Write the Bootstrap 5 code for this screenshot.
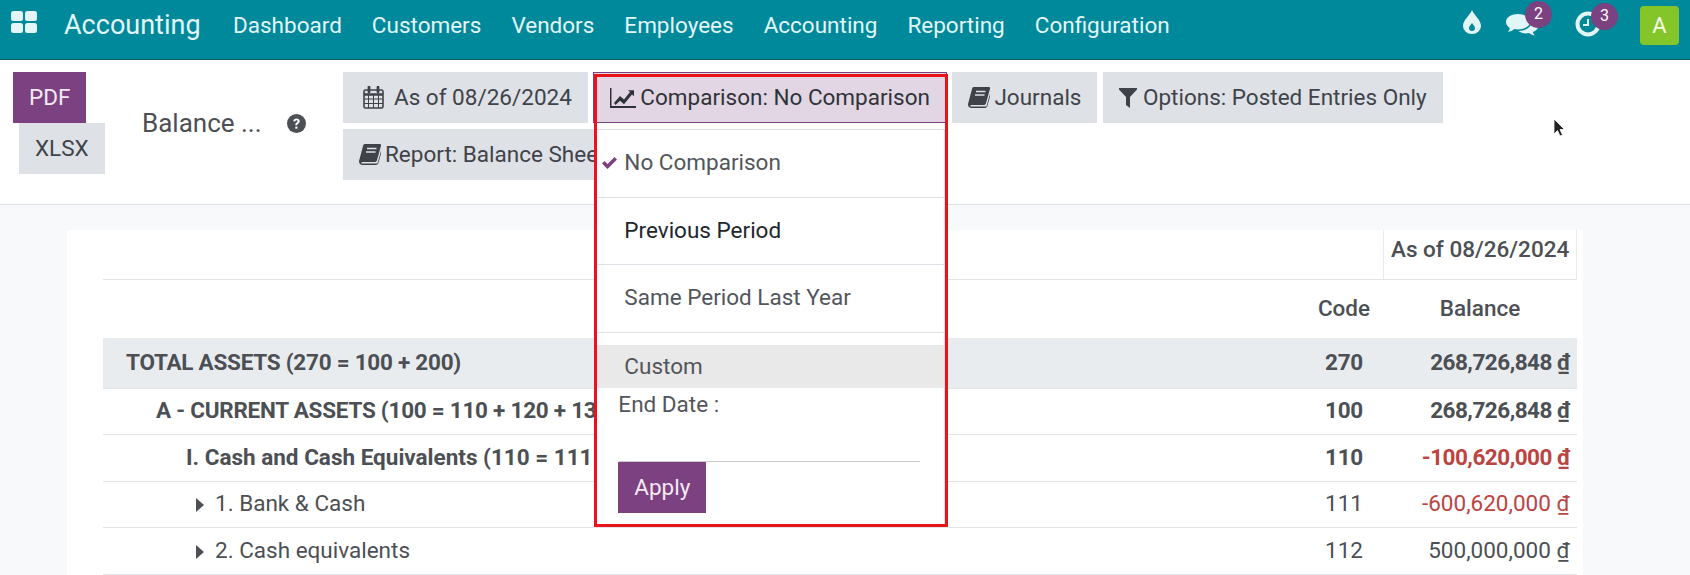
<!DOCTYPE html>
<html lang="en">
<head>
  <meta charset="UTF-8">
  <title>Balance Sheet</title>
  <link href="https://cdn.jsdelivr.net/npm/bootstrap@5.3.3/dist/css/bootstrap.min.css" rel="stylesheet">
  <style>
    html, body { height: 575px; overflow: hidden; }
    body { font-family: Roboto, "Liberation Sans", sans-serif; font-size: 22.5px; color: #4c4f54; background: #f8f9fa; position: relative; }
    .topbar { height: 60px; background: #00889b; border-bottom: 1px solid #0a5f6c; color: #e3f6f7; padding: 0 11px 8px 11px; }
    .apps-icon { width: 26px; height: 22px; margin-bottom: 7px; flex: none; }
    .brand-name { font-size: 27px; margin-left: 27px; margin-right: 32px; width: 137px; flex: none; white-space: nowrap; }
    .top-link { color: #e3f6f7; text-decoration: none; font-size: 22.5px; margin-right: 30px; }
    .top-icons { margin-left: auto; position: relative; }
    .drop-icon { margin-right: 25px; margin-bottom: 8px; }
    .sys-item { position: relative; display: block; }
    .sys-chat { margin-right: 36px; margin-bottom: 3px; }
    .sys-clock { margin-right: 38px; margin-bottom: 4px; }
    .count-dot { position: absolute; width: 27px; height: 27px; border-radius: 50%; background: #7c4180; color: #fff; font-size: 16px; line-height: 26px; text-align: center; }
    .dot-chat { left: 19px; top: -11px; }
    .dot-clock { left: 17px; top: -7px; }
    .avatar-box { width: 39px; height: 39px; border-radius: 4px; background: #84c52a; color: #f4fbe8; font-size: 22px; line-height: 39px; text-align: center; }
    .toolbar { height: 145px; background: #fff; border-bottom: 1px solid #dee2e6; padding: 12px 0 0 13px; }
    .export-col { width: 92px; flex: none; }
    .flat-btn { border: 0; border-radius: 0; height: 51px; padding: 0 16px; font-size: 22.5px; color: #3f4349; background: #dee1e6; white-space: nowrap; display: inline-flex; align-items: center; gap: 4px; }
    .flat-btn svg { flex: none; }
    .btn-plum { background: #7c4180; color: #f3eaf4; }
    .btn-xlsx { margin-left: 6px; padding-right: 16px; }
    .report-title { width: 238px; flex: none; padding: 0 0 0 37px; height: 102px; font-size: 26px; color: #4c4f54; }
    .report-title svg { margin-left: 25px; }
    .filter-wrap { width: 1130px; row-gap: 6px; column-gap: 5.5px; }
    .icon-wide { margin-left: 4px; margin-right: 6px; }
    .btn-options { gap: 6px; }
    .filter-active { background: #e2d6e4; border: 1px solid #7c4180; color: #2f3338; }
    .menu-anchor { position: relative; }
    .compare-menu { position: absolute; top: 57px; left: 2px; width: 350px; margin: 0; padding: 0; border: 1px solid #dee2e6; border-radius: 0; z-index: 5; font-size: 22.5px; height: 397px; }
    .compare-menu .dropdown-item { height: 67.5px; display: flex; align-items: center; padding: 0 0 0 28px; position: relative; color: #52565b; border-bottom: 1px solid #dee2e6; }
    .compare-menu .dropdown-item.item-hover { color: #22262b; }
    .compare-menu .dropdown-item.item-custom { height: 43px; margin-top: 12px; background: #e9e9e9; border: 0; padding-top: 1px; }
    .check-mark { position: absolute; left: 6px; top: 27px; }
    .end-date { padding: 1px 0 0 22px; color: #52565b; line-height: 30px; }
    .date-line { margin: 42px 24px 0 23px; height: 1px; background: #c9c9c9; }
    .btn-apply { margin-left: 22px; width: 88px; padding: 2px 0 0; justify-content: center; }
    .sheet { width: 1516px; margin: 25px 0 0 67px; background: #fff; height: 346px; padding: 0 6px 0 36px; }
    .sheet-table { width: 1474px; table-layout: fixed; margin: 0; color: #4c4f54; --bs-table-bg: transparent; }
    .sheet-table td, .sheet-table th { padding: 0 7px; border-color: #e2e5e8; vertical-align: middle; font-weight: 400; white-space: nowrap; overflow: hidden; }
    .col-code { width: 79px; text-align: center; }
    .col-amount { width: 193px; text-align: right; white-space: nowrap; }
    .row-as-of td { height: 49px; padding-bottom: 9px; }
    .row-as-of .head-date { border-left: 1px solid #e9ecef; border-right: 1px solid #e9ecef; font-weight: 500; text-align: center; }
    .row-heads td { height: 59px; border-bottom: 0; font-weight: 500; }
    .row-heads .col-amount { text-align: center; }
    .sheet-table tr.line-a td { height: 46.5px; }
    .row-total td { background: #e9ecef; height: 50px !important; }
    .is-bold td { font-weight: 700; letter-spacing: -.25px; }
    .is-bold .col-amount { letter-spacing: -.5px; }
    .is-bold td.label-wide { letter-spacing: 0; }
    .neg { color: #bb4442; }
    .cur { text-decoration: underline; }
    .indent-0 { padding-left: 23px !important; }
    .indent-1 { padding-left: 53px !important; }
    .indent-2 { padding-left: 83px !important; }
    .indent-3 { padding-left: 93px !important; }
    .caret-r { margin-right: 11px; }
    .mark-box { position: absolute; left: 594px; top: 74px; width: 354px; height: 453px; border: 3px solid #e8131b; z-index: 6; pointer-events: none; }
    .mouse-arrow { position: absolute; left: 1553px; top: 118px; z-index: 6; }
  </style>
</head>
<body>
  <!-- top bar -->
  <nav class="topbar d-flex align-items-center">
    <svg class="apps-icon" viewBox="0 0 26 22" fill="#e3f6f7"><rect x="0" y="0" width="12" height="10" rx="2.500"/><rect x="14" y="0" width="12" height="10" rx="2.500"/><rect x="0" y="12" width="12" height="10" rx="2.500"/><rect x="14" y="12" width="12" height="10" rx="2.500"/></svg>
    <span class="brand-name">Accounting</span>
    <a class="top-link" href="#">Dashboard</a>
    <a class="top-link" href="#">Customers</a>
    <a class="top-link" href="#">Vendors</a>
    <a class="top-link" href="#">Employees</a>
    <a class="top-link" href="#">Accounting</a>
    <a class="top-link" href="#">Reporting</a>
    <a class="top-link" href="#">Configuration</a>
    <div class="top-icons d-flex align-items-center">
      <svg class="drop-icon" width="18" height="24" viewBox="0 0 18 24" fill="#e3f6f7"><path fill-rule="evenodd" d="M9 0C11 5 18 10 18 16a9 8 0 0 1-18 0C0 10 7 5 9 0ZM9 13c-1 2-3 3-3 5a3 3 0 0 0 6 0c0-2-2-3-3-5Z"/></svg>
      <div class="sys-item sys-chat">
        <svg width="32" height="24" viewBox="0 0 32 24" fill="#e3f6f7" class="d-block"><path d="M12 2C5.500 2 0 5 0 10c0 2.500 1.500 4.500 3.800 5.900C3.500 17.500 2.700 19 1.800 20c2.500-.3 5-1.500 6.500-3 1.300.3 2.400.4 3.700.4 6.500 0 12-3.400 12-7.700S18.500 2 12 2Z"/><path d="M25.500 9.500c.3 4.800-5 9.300-13 9.600 2 1.700 4.500 2.400 7.400 2.400 1 0 2-.1 3-.4 1.400 1.200 3.500 2.200 5.800 2.400-.8-1-1.600-2.100-1.900-3.400C30 19 32 16.800 32 14.500c0-2.200-2.700-4-6.500-5Z"/></svg>
        <span class="count-dot dot-chat">2</span>
      </div>
      <div class="sys-item sys-clock">
        <svg width="28" height="28" viewBox="0 0 28 28" fill="none" stroke="#e3f6f7" class="d-block"><circle cx="14" cy="14" r="10.500" stroke-width="4"/><path d="M14 9v6h-5" stroke-width="2"/></svg>
        <span class="count-dot dot-clock">3</span>
      </div>
      <div class="avatar-box">A</div>
    </div>
  </nav>

  <!-- control panel -->
  <div class="toolbar d-flex">
    <div class="export-col">
      <button class="btn flat-btn btn-plum d-flex">PDF</button>
      <button class="btn flat-btn btn-xlsx d-flex">XLSX</button>
    </div>
    <div class="report-title d-flex align-items-center">
      <span>Balance ...</span>
      <svg width="19" height="19" viewBox="0 0 19 19"><circle cx="9.500" cy="9.500" r="9.500" fill="#4c4f54"/><path d="M6.300 7.300c.2-1.900 1.500-2.800 3.200-2.800 1.900 0 3.200 1.100 3.200 2.700 0 2.200-2.500 2.200-2.500 4H8.300c0-2.700 2.300-2.700 2.300-3.900 0-.6-.5-1-1.100-1-.7 0-1.100.4-1.300 1.200Z" fill="#fff"/><rect x="8.300" y="12.600" width="2.100" height="2.100" fill="#fff"/></svg>
    </div>
    <div class="filter-wrap d-flex flex-wrap align-content-start">
      <button class="btn flat-btn">
        <svg class="icon-wide" width="21" height="23" viewBox="0 0 21 23" fill="none" stroke="#3f4349"><rect x="1" y="4" width="19" height="18" rx="1.500" stroke-width="1.600"/><path d="M1 8.500h19" stroke-width="2.500"/><path d="M5.500 8v14M10.500 8v14M15.500 8v14M1 13h19M1 17.500h19" stroke-width="1"/><path d="M6 1v5M15 1v5" stroke-width="2.800" stroke-linecap="round"/></svg>
        <span>As of 08/26/2024</span>
      </button>
      <div class="menu-anchor">
        <button class="btn flat-btn filter-active">
          <svg width="26" height="20" viewBox="0 0 26 20" fill="#2f3338"><path d="M0 0h1.500v18H26v2H0Z"/><path d="M4 15l6-7 4 3.500 6-7.500-2-1.700h6v6l-2-1.700-8 9.600-4-3.500-4.500 4.300Z"/></svg>
          <span>Comparison: No Comparison</span>
        </button>
        <div class="dropdown-menu show compare-menu">
          <a class="dropdown-item" href="#">
            <svg class="check-mark" width="15" height="12" viewBox="0 0 15 12" fill="#7c4180"><path d="M0 6.500l2.500-2.500 3 3L12.500 0 15 2.500 5.500 12Z"/></svg>
            No Comparison
          </a>
          <a class="dropdown-item item-hover" href="#">Previous Period</a>
          <a class="dropdown-item" href="#">Same Period Last Year</a>
          <a class="dropdown-item item-custom" href="#">Custom</a>
          <div class="end-date">End Date :</div>
          <div class="date-line"></div>
          <button class="btn flat-btn btn-plum btn-apply">Apply</button>
        </div>
      </div>
      <button class="btn flat-btn">
        <svg width="22" height="21" viewBox="0 0 22 21" fill="#3f4349"><path d="M6 0h15c1 0 1.300.8 1 1.800l-4 14.500c-.4 1.300-1 1.700-2 1.700H4c-1 0-1.700.5-1.700 1 0 .4.400.6 1.200.6h14c.6 0 1-.2 1.200-.8l3.800-13.500.5 1-3.700 13C18.600 20.600 18 21 17 21H3.500C1.500 21 0 19.500 0 17.500c0-.6.100-1 .3-1.600L4 2C4.400.6 5 0 6 0Z"/><path d="M8 4.500h9.500M7 8h9.500" stroke="#dee1e6" stroke-width="1.500"/></svg>
        <span>Journals</span>
      </button>
      <button class="btn flat-btn btn-options">
        <svg width="18" height="20" viewBox="0 0 18 20" fill="#3f4349"><path d="M0 0h18v1.500L11 9v11L7 17V9L0 1.500Z"/></svg>
        <span>Options: Posted Entries Only</span>
      </button>
      <button class="btn flat-btn">
        <svg width="22" height="21" viewBox="0 0 22 21" fill="#3f4349"><path d="M6 0h15c1 0 1.300.8 1 1.800l-4 14.500c-.4 1.300-1 1.700-2 1.700H4c-1 0-1.700.5-1.700 1 0 .4.400.6 1.200.6h14c.6 0 1-.2 1.200-.8l3.800-13.500.5 1-3.700 13C18.600 20.600 18 21 17 21H3.500C1.500 21 0 19.500 0 17.500c0-.6.100-1 .3-1.600L4 2C4.400.6 5 0 6 0Z"/><path d="M8 4.500h9.500M7 8h9.500" stroke="#dee1e6" stroke-width="1.500"/></svg>
        <span>Report: Balance Sheet</span>
      </button>
    </div>
  </div>

  <!-- report -->
  <div class="sheet">
    <table class="table sheet-table">
      <colgroup><col><col class="col-code"><col class="col-amount"></colgroup>
      <tr class="row-as-of"><td colspan="2"></td><td class="head-date">As of 08/26/2024</td></tr>
      <tr class="row-heads"><td></td><td class="col-code">Code</td><td class="col-amount">Balance</td></tr>
      <tr class="row-total is-bold"><td class="indent-0">TOTAL ASSETS (270 = 100 + 200)</td><td class="col-code">270</td><td class="col-amount">268,726,848 <span class="cur">₫</span></td></tr>
      <tr class="line-a is-bold"><td class="indent-1">A - CURRENT ASSETS (100 = 110 + 120 + 130 + 140 + 150)</td><td class="col-code">100</td><td class="col-amount">268,726,848 <span class="cur">₫</span></td></tr>
      <tr class="line-a is-bold"><td class="indent-2 label-wide">I. Cash and Cash Equivalents (110 = 111 + 112)</td><td class="col-code">110</td><td class="col-amount neg">-100,620,000 <span class="cur">₫</span></td></tr>
      <tr class="line-a"><td class="indent-3"><svg class="caret-r" width="8" height="14" viewBox="0 0 8 14" fill="#4c4f54"><path d="M0 0l8 7-8 7Z"/></svg>1. Bank &amp; Cash</td><td class="col-code">111</td><td class="col-amount neg">-600,620,000 <span class="cur">₫</span></td></tr>
      <tr class="line-a"><td class="indent-3"><svg class="caret-r" width="8" height="14" viewBox="0 0 8 14" fill="#4c4f54"><path d="M0 0l8 7-8 7Z"/></svg>2. Cash equivalents</td><td class="col-code">112</td><td class="col-amount">500,000,000 <span class="cur">₫</span></td></tr>
    </table>
  </div>

  <!-- annotation + pointer -->
  <div class="mark-box"></div>
  <svg class="mouse-arrow" width="12" height="20" viewBox="0 0 12 20"><path d="M1 1v15l3.500-3.500L7 18l2.500-1-2.500-5.500h4.500Z" fill="#222" stroke="#fff" stroke-width=".8"/></svg>
  <script src="https://cdn.jsdelivr.net/npm/bootstrap@5.3.3/dist/js/bootstrap.bundle.min.js"></script>
</body>
</html>
